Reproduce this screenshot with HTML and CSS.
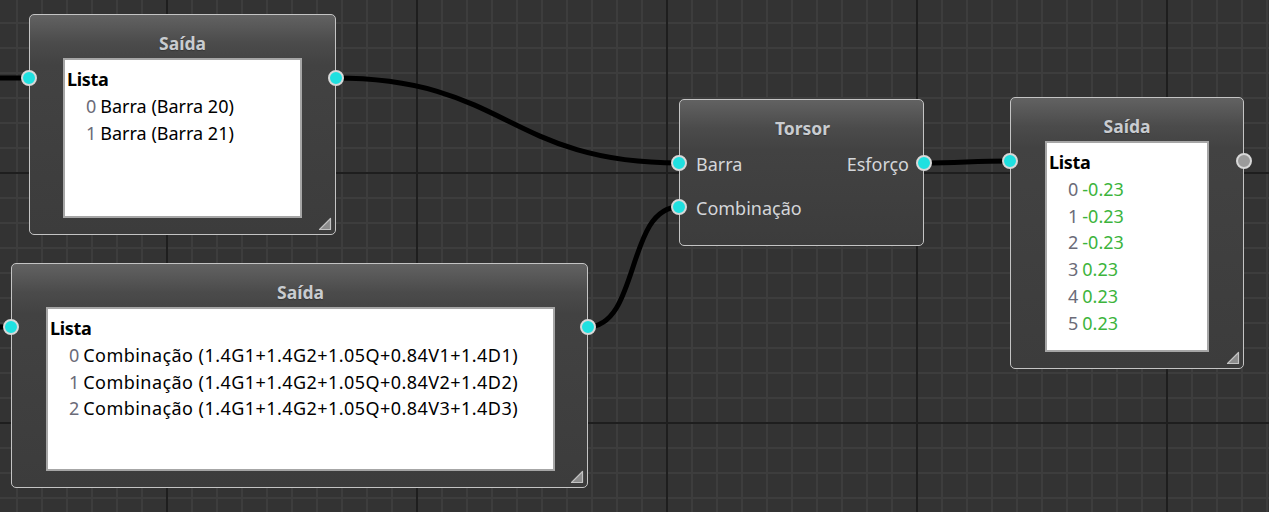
FILE: index.html
```html
<!DOCTYPE html>
<html>
<head>
<meta charset="utf-8">
<link rel="stylesheet" href="styles.css">
</head>
<body>
<div class="canvas">
  <svg class="wires" width="1269" height="512" viewBox="0 0 1269 512">
    <path d="M0 78 L29 78" />
    <path d="M0 327 L11 327" />
    <path d="M335 78 C507 78 507 163 679 163" />
    <path d="M587 327 C640 327 626 207 679 207" />
    <path d="M923 163 C960 163 972 161 1010 161" />
  </svg>

  <div class="node node-a">
    <div class="title">Saída</div>
    <div class="listbox">
      <div class="head">Lista</div>
      <div class="row"><span class="idx">0</span><span class="val">Barra (Barra 20)</span></div>
      <div class="row"><span class="idx">1</span><span class="val">Barra (Barra 21)</span></div>
    </div>
    <span class="port in on"></span>
    <span class="port out on"></span>
    <svg class="grip" width="14" height="14" viewBox="0 0 14 14"><polygon points="12.5,1.5 12.5,12.5 1.5,12.5" /></svg>
  </div>

  <div class="node node-b">
    <div class="title">Saída</div>
    <div class="listbox">
      <div class="head">Lista</div>
      <div class="row"><span class="idx">0</span><span class="val wide">Combinação (1.4G1+1.4G2+1.05Q+0.84V1+1.4D1)</span></div>
      <div class="row"><span class="idx">1</span><span class="val wide">Combinação (1.4G1+1.4G2+1.05Q+0.84V2+1.4D2)</span></div>
      <div class="row"><span class="idx">2</span><span class="val wide">Combinação (1.4G1+1.4G2+1.05Q+0.84V3+1.4D3)</span></div>
    </div>
    <span class="port in on"></span>
    <span class="port out on"></span>
    <svg class="grip" width="14" height="14" viewBox="0 0 14 14"><polygon points="12.5,1.5 12.5,12.5 1.5,12.5" /></svg>
  </div>

  <div class="node node-t">
    <div class="title">Torsor</div>
    <div class="ports">
      <div class="prow"><span class="plabel">Barra</span><span class="plabel">Esforço</span></div>
      <div class="prow"><span class="plabel">Combinação</span></div>
    </div>
    <span class="port t-in1 on"></span>
    <span class="port t-in2 on"></span>
    <span class="port t-out on"></span>
  </div>

  <div class="node node-c">
    <div class="title">Saída</div>
    <div class="listbox">
      <div class="head">Lista</div>
      <div class="row"><span class="idx">0</span><span class="num">-0.23</span></div>
      <div class="row"><span class="idx">1</span><span class="num">-0.23</span></div>
      <div class="row"><span class="idx">2</span><span class="num">-0.23</span></div>
      <div class="row"><span class="idx">3</span><span class="num">0.23</span></div>
      <div class="row"><span class="idx">4</span><span class="num">0.23</span></div>
      <div class="row"><span class="idx">5</span><span class="num">0.23</span></div>
    </div>
    <span class="port in on"></span>
    <span class="port out off"></span>
    <svg class="grip" width="14" height="14" viewBox="0 0 14 14"><polygon points="12.5,1.5 12.5,12.5 1.5,12.5" /></svg>
  </div>
</div>
</body>
</html>
```

FILE: styles.css
```css
html, body {
  margin: 0;
  padding: 0;
}
body {
  background: #323232;
  font-family: "Noto Sans", "Open Sans", sans-serif;
}
.canvas {
  position: relative;
  width: 1269px;
  height: 512px;
  overflow: hidden;
  background-color: #333333;
  background-image:
    linear-gradient(to right, #1e1e1e 2px, transparent 2px),
    linear-gradient(to bottom, #1e1e1e 2px, transparent 2px),
    linear-gradient(to right, #3d3d3d 2px, transparent 2px),
    linear-gradient(to bottom, #3d3d3d 2px, transparent 2px);
  background-size: 250px 100%, 100% 250px, 25px 100%, 100% 25px;
  background-position: 416px 0, 0 172px, 16px 0, 0 22px;
}
.wires {
  position: absolute;
  left: 0;
  top: 0;
}
.wires path {
  fill: none;
  stroke: #000;
  stroke-width: 5;
}
.node {
  position: absolute;
  box-sizing: border-box;
  border: 1px solid #c4c4c4;
  border-radius: 5px;
  background: linear-gradient(to bottom, #626262 0px, #4b4b4b 28px, #424242 50px, #3c3c3c 100%);
  display: flex;
  flex-direction: column;
  padding: 0 33px 16px;
}
.title {
  height: 43px;
  box-sizing: border-box;
  padding-top: 15px;
  text-align: center;
  font-weight: bold;
  font-size: 17.5px;
  line-height: 26px;
  color: #c9ccd0;
  text-shadow: 0 1px 1px rgba(0,0,0,0.25);
}
.listbox {
  flex: 1;
  background: #ffffff;
  border: 2px solid #a6a6a6;
  padding: 6px 2px 0;
  font-size: 18px;
  line-height: 26.8px;
  color: #000;
}
.head {
  font-weight: bold;
  letter-spacing: -0.3px;
}
.row {
  display: flex;
  padding-left: 19px;
  white-space: nowrap;
}
.idx {
  color: #6b6b78;
  margin-right: 4px;
}
.val.wide {
  letter-spacing: 0.45px;
}
.num {
  color: #3cb43c;
}
.node-a {
  left: 29px;
  top: 14px;
  width: 307px;
  height: 221px;
}
.node-b {
  left: 11px;
  top: 263px;
  width: 577px;
  height: 225px;
  padding-right: 32px;
  padding-left: 34px;
}
.node-c {
  left: 1010px;
  top: 97px;
  width: 234px;
  height: 272px;
  padding-left: 34px;
  padding-right: 34px;
}
.node-t {
  left: 679px;
  top: 99px;
  width: 245px;
  height: 147px;
  padding: 0 14px 0 16px;
}
.node-t .title {
  height: 51px;
  padding-top: 15px;
}
.ports {
  display: flex;
  flex-direction: column;
  gap: 18px;
  font-size: 18px;
  line-height: 26px;
  color: #d4d6d9;
}
.prow {
  display: flex;
  justify-content: space-between;
}
.port {
  position: absolute;
  width: 16px;
  height: 16px;
  box-sizing: border-box;
  border-radius: 50%;
  border: 2px solid #d8d8d8;
}
.port.on {
  background: #1fe0e0;
}
.port.off {
  background: #9b9b9b;
}
.port.in {
  left: -9px;
  top: 55px;
}
.port.out {
  right: -9px;
  top: 55px;
}
.t-in1 {
  left: -9px;
  top: 55px;
}
.t-in2 {
  left: -9px;
  top: 99px;
}
.t-out {
  right: -9px;
  top: 55px;
}
.grip {
  position: absolute;
  right: 3px;
  bottom: 3px;
}
.grip polygon {
  fill: #8c8c8c;
  stroke: #c2c2c2;
  stroke-width: 1.2;
  stroke-linejoin: round;
}
```
